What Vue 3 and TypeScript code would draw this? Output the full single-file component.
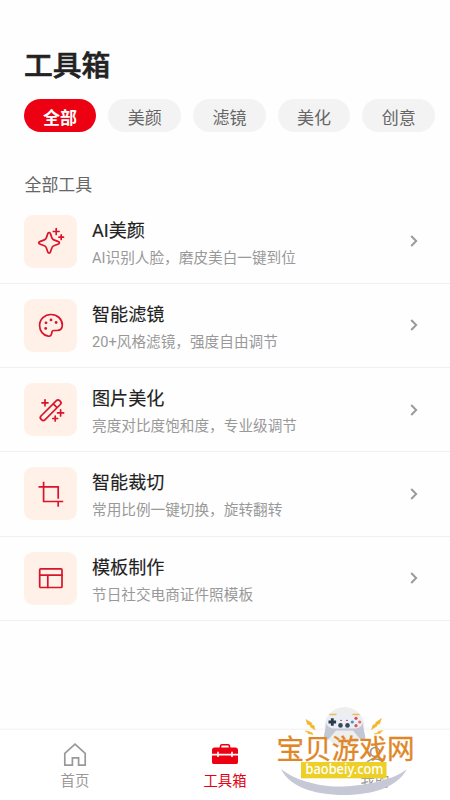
<script setup lang="ts">
import { ref } from 'vue'

type IconName = 'sparkle' | 'palette' | 'wand' | 'crop' | 'layout'

interface Tool {
  title: string
  desc: string
  icon: IconName
}

const tabs: string[] = ['全部', '美颜', '滤镜', '美化', '创意']
const active = ref(0)

const tools: Tool[] = [
  { title: 'AI美颜', desc: 'AI识别人脸，磨皮美白一键到位', icon: 'sparkle' },
  { title: '智能滤镜', desc: '20+风格滤镜，强度自由调节', icon: 'palette' },
  { title: '图片美化', desc: '亮度对比度饱和度，专业级调节', icon: 'wand' },
  { title: '智能裁切', desc: '常用比例一键切换，旋转翻转', icon: 'crop' },
  { title: '模板制作', desc: '节日社交电商证件照模板', icon: 'layout' },
]
</script>

<template>
  <div class="screen">
    <h1 class="heading">工具箱</h1>

    <nav class="tabs">
      <button
        v-for="(tab, i) in tabs"
        :key="tab"
        class="tab"
        :class="{ active: i === active }"
        @click="active = i"
      >{{ tab }}</button>
    </nav>

    <h2 class="section">全部工具</h2>

    <ul class="list">
      <li v-for="tool in tools" :key="tool.title" class="row">
        <div class="tile">
          <svg class="tile-icon" viewBox="0 0 28 28">
            <g v-if="tool.icon === 'sparkle'">
              <path d="M10.900 6.400c.4-1.200 2-1.200 2.400 0l1.700 4.700c.3.900.9 1.500 1.800 1.800l4.700 1.700c1.200.4 1.200 2 0 2.400l-4.700 1.700c-.9.3-1.500.9-1.800 1.800l-1.700 4.700c-.4 1.200-2 1.200-2.400 0l-1.700-4.700c-.3-.9-.9-1.500-1.800-1.800L2.700 17c-1.200-.4-1.200-2 0-2.400l4.700-1.700c.9-.3 1.500-.9 1.800-1.800z" />
              <path d="M19.200 1.600v5.800M16.300 4.500h5.800M24.200 7.900v4.600M21.900 10.200h4.600" />
            </g>
            <g v-else-if="tool.icon === 'palette'">
              <path d="M11.200 25.200C6.200 24.400 2.600 20 2.600 14.500 2.600 8.200 7.700 3.500 14 3.500c6.200 0 11.300 4.500 11.300 10.500 0 3.800-2.300 5.500-5.300 5.500h-3c-1.500 0-2.100.8-2.200 2.200-.2 2.200-1.200 3.900-3.600 3.500z" />
              <g class="dots">
                <circle cx="9" cy="11.800" r="1.400" />
                <circle cx="14" cy="8.900" r="1.400" />
                <circle cx="19.100" cy="11.500" r="1.400" />
                <circle cx="8.700" cy="17.400" r="1.400" />
              </g>
            </g>
            <g v-else-if="tool.icon === 'wand'">
              <path d="M4 20 19.400 4.600a2.300 2.300 0 0 1 3.200 0l.7.7a2.300 2.300 0 0 1 0 3.200L7.900 23.900a2.300 2.300 0 0 1-3.200 0l-.7-.7a2.300 2.300 0 0 1 0-3.200zM16.200 7.800l3.900 3.900" />
              <path d="M8 3.800v6M5 6.800h6M23.600 13.900v6M20.600 16.900h6M18.200 20.100v4.800M15.800 22.500h4.800" />
            </g>
            <g v-else-if="tool.icon === 'crop'" class="square">
              <path d="M6.600 1.800v19.700h19.600M1.500 6.900h19.700v11.800M21.200 21.500v5.300" />
            </g>
            <g v-else>
              <rect x="2.700" y="4.900" width="22.300" height="18.600" rx="1" />
              <path d="M2.700 11.200H25M10.800 11.200v12.300" />
            </g>
          </svg>
        </div>
        <div class="info">
          <div class="title">{{ tool.title }}</div>
          <div class="desc">{{ tool.desc }}</div>
        </div>
        <svg class="chevron" viewBox="0 0 10 14"><path d="M2.200 2l5 5-5 5" /></svg>
      </li>
    </ul>

    <footer class="bar">
      <div class="bar-item">
        <svg class="bar-icon" viewBox="0 0 28 26">
          <path class="line" d="M3.800 11.400 14 2.200l10.200 9.200v11.700h-6.600v-7.300h-6.200v7.300H3.800z" />
        </svg>
        <span>首页</span>
      </div>
      <div class="bar-item current">
        <svg class="bar-icon" viewBox="0 0 28 26">
          <path class="handle" d="M9.500 6V4.300c0-1 .6-1.600 1.600-1.600h5.800c1 0 1.600.6 1.600 1.600V6" />
          <path class="fill" d="M3.500 5.400h21c1.500 0 2.500 1 2.500 2.300v4.100h-5.200V9.700h-1.600v2.100H7.800V9.700H6.200v2.100H1V7.700c0-1.300 1-2.300 2.500-2.300zM1 13.400h5.200v1.700h1.600v-1.700h12.400v1.700h1.600v-1.700H27v6.900c0 .9-.7 1.600-1.600 1.600H2.600c-.9 0-1.600-.7-1.600-1.600z" />
        </svg>
        <span>工具箱</span>
      </div>
      <div class="bar-item">
        <svg class="bar-icon" viewBox="0 0 28 26">
          <circle class="line" cx="14" cy="10" r="4.500" />
          <path class="line" d="M4 25c1-5 5-8 10-8s9 3 10 8" />
        </svg>
        <span>我的</span>
      </div>
    </footer>

    <svg class="brand" viewBox="0 0 165 100">
      <circle cx="79.500" cy="27" r="20" fill="#eeeeef" />
      <path d="M16 69c12 10 35 17.500 58 17.500S129 80 142 69c-9 17-32 26-63 26S24 86 16 69z" fill="#c7c8d6" />
      <path d="M61.500 23h36l2.800 14c.5 3.500-3.500 4-5.500 1.500L88 30.500H71L64.200 38.500c-2 2.500-6 2-5.500-1.500z" fill="#c3c6d3" />
      <path d="M67 15h25c4 0 6 3 5.600 7-.3 4.300-3.600 6.500-7.600 6.500H69c-4 0-7.400-2.200-7.700-6.500-.4-4 1.700-7 5.700-7z" fill="#eceef5" />
      <path d="M64.500 14.500h7M87.500 14.500h7" stroke="#edbd55" stroke-width="1.700" />
      <path d="M67.300 18.200v7.600M63.500 22h7.600" stroke="#293a4c" stroke-width="2.800" />
      <circle cx="75.500" cy="25.400" r="2.300" fill="#33485a" />
      <circle cx="82.500" cy="25.400" r="2.300" fill="#33485a" />
      <path d="M75 20.400h2M81 20.400h2" stroke="#bf5265" stroke-width="1" />
      <circle cx="91" cy="18.300" r="1.600" fill="#dd4d58" />
      <circle cx="91" cy="25.700" r="1.600" fill="#dd4d58" />
      <circle cx="87.300" cy="22" r="1.600" fill="#3d9ab4" />
      <circle cx="94.700" cy="22" r="1.600" fill="#e46b70" />
      <path d="m41 19.500 5.800 3.500-.3 1.800 2.500.7 1 4.500-5-3.500.2-1.500-2.700-.5zM40 31l4.500.5.500 1h2l1 2-5-1v-1zM116.500 18.500l-5.800 4-.2 1.800-2.500.7-1.500 4.500 5.500-3.500v-1.500l2.500-.5zM118 30.500l-5 1v1l-4 1.500 6.500-.7v-1z" fill="#f2b728" stroke="#f2b728" stroke-width=".5" />
      <rect x="36" y="62" width="85.500" height="16.300" fill="#ecd027" />
      <text class="brand-name" x="11.500" y="58.500" textLength="138">宝贝游戏网</text>
      <text class="brand-url" x="40.500" y="74.300" textLength="78" lengthAdjust="spacingAndGlyphs">baobeiy.com</text>
    </svg>
  </div>
</template>

<style>
body {
  margin: 0;
  background: #fefefe;
}
</style>

<style scoped>
.screen {
  position: relative;
  box-sizing: border-box;
  display: flex;
  flex-direction: column;
  width: 450px;
  height: 800px;
  overflow: hidden;
  padding-top: 45px;
  background: #fefefe;
  font-family: Roboto, 'Noto Sans CJK SC', sans-serif;
}
.heading {
  margin: 0;
  padding-left: 24px;
  height: 42px;
  line-height: 42px;
  font-size: 28.800px;
  font-weight: 500;
  color: #222;
  -webkit-text-stroke: 0.600px #222;
}
.tabs {
  display: flex;
  gap: 12px;
  margin-top: 12px;
  padding-left: 23.700px;
}
.tab {
  box-sizing: border-box;
  flex: none;
  width: 72.700px;
  height: 33px;
  padding: 5px 0 0;
  border: 0;
  border-radius: 17px;
  background: #f3f3f3;
  color: #666;
  font: 400 17px/28px Roboto, 'Noto Sans CJK SC', sans-serif;
}
.tab.active {
  background: #ee0013;
  color: #fff;
  font-weight: 700;
}
.section {
  margin: 40px 0 0;
  padding-left: 24.500px;
  height: 26px;
  line-height: 26px;
  font-size: 16.900px;
  font-weight: 400;
  color: #666;
}
.list {
  margin: 1.600px 0 0;
  padding: 0;
  list-style: none;
}
.row {
  box-sizing: border-box;
  display: flex;
  align-items: center;
  height: 84.250px;
  padding: 0 30px 0 24px;
  border-bottom: 1px solid #f0f0f0;
}
.tile {
  display: flex;
  align-items: center;
  justify-content: center;
  width: 53px;
  height: 53px;
  border-radius: 9px;
  background: #fff0e8;
}
.tile-icon {
  width: 28px;
  height: 28px;
  fill: none;
  stroke: #d9142a;
  stroke-width: 1.700;
  stroke-linecap: round;
  stroke-linejoin: round;
}
.square {
  stroke-linecap: butt;
  stroke-linejoin: miter;
}
.dots {
  fill: #d9142a;
  stroke: none;
}
.info {
  flex: 1;
  padding: 5px 0 0 15px;
}
.title {
  height: 28px;
  line-height: 29px;
  font-size: 18.100px;
  font-weight: 400;
  color: #222;
  -webkit-text-stroke: 0.150px #222;
}
.desc {
  height: 28px;
  line-height: 28px;
  font-size: 14.650px;
  color: #999;
}
.chevron {
  width: 10px;
  height: 14px;
  margin-right: 1px;
  fill: none;
  stroke: #999;
  stroke-width: 1.900;
}
.bar {
  display: flex;
  height: 70px;
  margin-top: auto;
  background: #fff;
  box-shadow: 0 -1px 2px rgba(0, 0, 0, 0.06);
}
.bar-item {
  flex: 1;
  display: flex;
  flex-direction: column;
  align-items: center;
  padding-top: 12px;
  color: #999;
  font-size: 14.400px;
  line-height: 22px;
}
.bar-item span {
  padding-top: 3px;
}
.bar-item.current {
  color: #e60012;
}
.bar-icon {
  width: 28px;
  height: 26px;
}
.line {
  fill: none;
  stroke: #999;
  stroke-width: 1.700;
}
.handle {
  fill: none;
  stroke: #e60012;
  stroke-width: 1.600;
}
.fill {
  fill: #ee0013;
}
.brand {
  position: absolute;
  left: 265px;
  top: 700px;
  width: 165px;
  height: 100px;
}
.brand-name {
  font: 400 27.600px 'Noto Sans CJK SC', sans-serif;
  fill: #df8726;
  stroke: #df8726;
  stroke-width: 0.300;
}
.brand-url {
  font: 500 14.500px 'Noto Sans', sans-serif;
  fill: #fff;
}
</style>
